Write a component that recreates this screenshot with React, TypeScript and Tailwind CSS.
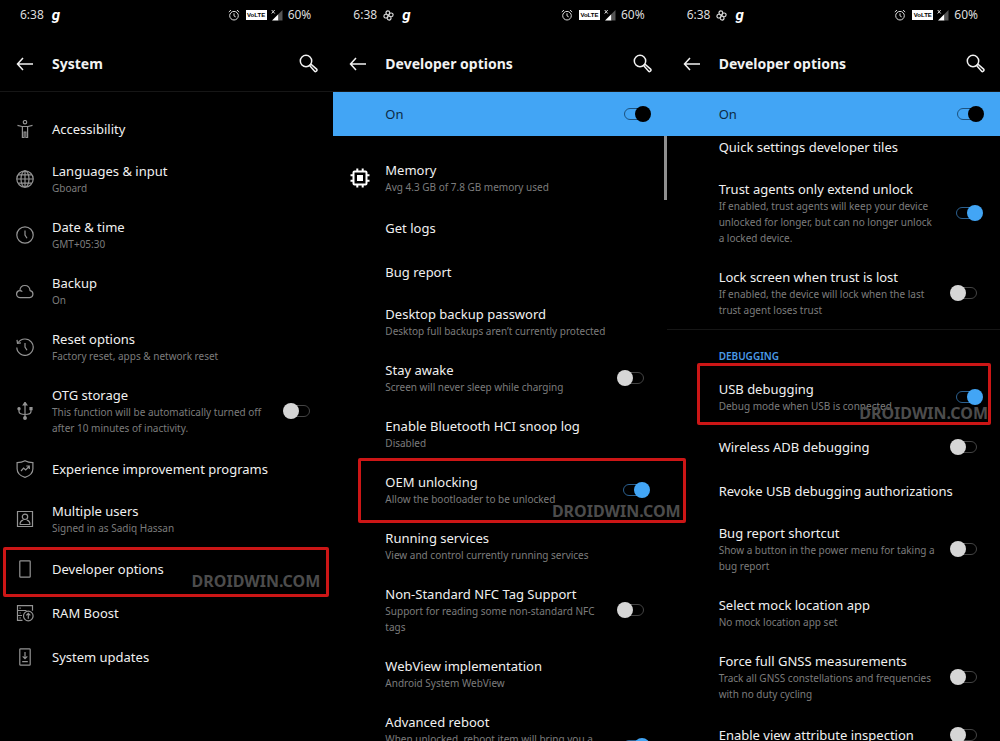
import { useId, useState } from 'react'
import type { ReactNode } from 'react'
import clsx from 'clsx'

type Option = {
  title: string
  summary?: string
  icon?: ReactNode
  checked?: boolean
  // placement of the red frame (and the caption in its corner) over the row
  frame?: string
}

const line = {
  viewBox: '0 0 18 18',
  fill: 'none',
  stroke: 'currentColor',
  strokeWidth: 1.2,
  className: 'w-[18px] h-[18px]',
  'aria-hidden': true,
} as const

const AccessibilityIcon = () => (
  <svg {...line}>
    <circle cx="9" cy="2.2" r="1.7" />
    <path d="M1.500 5.300 6 6.500h6l4.500-1.200M6.400 6.500v11h1.700v-5.500h1.800v5.500h1.700v-11" />
  </svg>
)

const GlobeIcon = () => (
  <svg {...line}>
    <circle cx="9" cy="9" r="8.200" />
    <ellipse cx="9" cy="9" rx="4" ry="8.200" />
    <path d="M9 .8v16.400M.8 9h16.400M2.200 4.800h13.600M2.200 13.200h13.600" />
  </svg>
)

const ClockIcon = () => (
  <svg {...line}>
    <circle cx="9" cy="9" r="8.200" />
    <path d="M9 4.500V9l2 3.200" />
  </svg>
)

const CloudIcon = () => (
  <svg {...line}>
    <path d="M4.300 15.700a3.500 3.500 0 0 1-.4-7C4 5.500 6 3.500 8.900 3.500s4.900 2 5.200 5.100a3.600 3.600 0 0 1-.4 7.100z" />
    <path d="M3.900 8.700c1 0 1.800.3 2.400.9" />
  </svg>
)

const ResetIcon = () => (
  <svg {...line}>
    <path d="M2.200 4.600A8.200 8.200 0 1 1 .8 9.500" />
    <path d="M1 1.900l.5 3.500 3.400-.5" />
    <path d="M9 5v4l2 3.200" />
  </svg>
)

const UsbIcon = () => (
  <svg {...line}>
    <path d="M9 2.500v13M9 12.500c-3.500 0-6-.8-6-3V7.500M9 12.500c3.500 0 6-.8 6-3V7.500" />
    <path d="M7.200 3 9 .3 10.800 3z" fill="currentColor" />
    <circle cx="9" cy="16" r="1.300" fill="currentColor" />
    <circle cx="3" cy="6.700" r="1.100" fill="currentColor" />
    <path d="M14 5.700h2v2h-2z" fill="currentColor" />
  </svg>
)

const ShieldIcon = () => (
  <svg {...line}>
    <path d="M9 .7c2.300 1.300 4.800 1.900 7.900 2v6.100c0 4.200-3 7.100-7.900 8.500-4.900-1.400-7.900-4.300-7.900-8.500V2.700c3.100-.1 5.600-.7 7.900-2z" />
    <path d="M5 11l2.600-3 2.100 2 3.300-3.500M10.300 6h3v3" />
  </svg>
)

const UserIcon = () => (
  <svg {...line}>
    <path d="M1.500 1.500h15v15h-15z" />
    <circle cx="9" cy="6.800" r="2.700" />
    <path d="M4 14.500c.1-2.500 1.200-3.900 3.200-4.300M14 14.500c-.1-2.500-1.200-3.900-3.200-4.300M3.800 14.500h10.400" />
  </svg>
)

const PhoneIcon = () => (
  <svg {...line}>
    <rect x="3.800" y=".8" width="10.400" height="16.400" rx=".8" />
  </svg>
)

const RamIcon = () => (
  <svg {...line}>
    <path d="M6.500 16.300H1.500V1.700h15v5M1.500 6.500h9M1.500 11.500H6" />
    <path d="M3.500 4.100h1.200M3.500 9h1.200M3.500 13.900h1.200" />
    <circle cx="12.300" cy="12" r="4.800" />
    <path d="M12.300 14.700V9.500M10.300 11.300l2-2 2 2" />
  </svg>
)

const UpdateIcon = () => (
  <svg {...line}>
    <rect x="3.800" y=".8" width="10.400" height="16.400" rx=".8" />
    <path d="M9 4v6.500M6.700 8.300 9 10.600l2.300-2.300M6.200 13.700h5.600" />
  </svg>
)

const ChipIcon = () => (
  <svg viewBox="0 0 20 20" className="ml-1 h-5 w-5 shrink-0 text-white" fill="none" stroke="currentColor" strokeWidth="2" aria-hidden>
    <rect x="3.500" y="3.500" width="13" height="13" rx="1" />
    <path d="M7 7h6v6H7z" fill="currentColor" stroke="none" />
    <path d="M7.300 3.500V.5M12.700 3.500V.5M7.300 19.500v-3M12.700 19.500v-3M3.500 7.300h-3M3.500 12.700h-3M19.500 7.300h-3M19.500 12.700h-3" />
  </svg>
)

const systemOptions: Option[] = [
  { title: 'Accessibility', icon: <AccessibilityIcon /> },
  { title: 'Languages & input', summary: 'Gboard', icon: <GlobeIcon /> },
  { title: 'Date & time', summary: 'GMT+05:30', icon: <ClockIcon /> },
  { title: 'Backup', summary: 'On', icon: <CloudIcon /> },
  { title: 'Reset options', summary: 'Factory reset, apps & network reset', icon: <ResetIcon /> },
  {
    title: 'OTG storage',
    summary: 'This function will be automatically turned off after 10 minutes of inactivity.',
    icon: <UsbIcon />,
    checked: false,
  },
  { title: 'Experience improvement programs', icon: <ShieldIcon /> },
  { title: 'Multiple users', summary: 'Signed in as Sadiq Hassan', icon: <UserIcon /> },
  { title: 'Developer options', icon: <PhoneIcon />, frame: 'left-[3px] right-1 top-0 -bottom-1.5 pr-1.5 pb-1' },
  { title: 'RAM Boost', icon: <RamIcon /> },
  { title: 'System updates', icon: <UpdateIcon /> },
]

const generalOptions: Option[] = [
  { title: 'Memory', summary: 'Avg 4.3 GB of 7.8 GB memory used', icon: <ChipIcon /> },
  { title: 'Get logs' },
  { title: 'Bug report' },
  { title: 'Desktop backup password', summary: 'Desktop full backups aren’t currently protected' },
  { title: 'Stay awake', summary: 'Screen will never sleep while charging', checked: false },
  { title: 'Enable Bluetooth HCI snoop log', summary: 'Disabled' },
  {
    title: 'OEM unlocking',
    summary: 'Allow the bootloader to be unlocked',
    checked: true,
    frame: 'left-[25px] -right-[19px] -top-1 -bottom-[5px] pr-0.5',
  },
  { title: 'Running services', summary: 'View and control currently running services' },
  { title: 'Non-Standard NFC Tag Support', summary: 'Support for reading some non-standard NFC tags', checked: false },
  { title: 'WebView implementation', summary: 'Android System WebView' },
  {
    title: 'Advanced reboot',
    summary: 'When unlocked, reboot item will bring you a choice to reboot into recovery or bootloader directly from the power menu',
    checked: true,
  },
]

const trustOptions: Option[] = [
  { title: 'Quick settings developer tiles' },
  {
    title: 'Trust agents only extend unlock',
    summary: 'If enabled, trust agents will keep your device unlocked for longer, but can no longer unlock a locked device.',
    checked: true,
  },
  {
    title: 'Lock screen when trust is lost',
    summary: 'If enabled, the device will lock when the last trust agent loses trust',
    checked: false,
  },
]

const debuggingOptions: Option[] = [
  {
    title: 'USB debugging',
    summary: 'Debug mode when USB is connected',
    checked: true,
    frame: 'left-[30px] right-[9px] -top-1.5 bottom-0 pr-0',
  },
  { title: 'Wireless ADB debugging', checked: false },
  { title: 'Revoke USB debugging authorizations' },
  { title: 'Bug report shortcut', summary: 'Show a button in the power menu for taking a bug report', checked: false },
  { title: 'Select mock location app', summary: 'No mock location app set' },
  {
    title: 'Force full GNSS measurements',
    summary: 'Track all GNSS constellations and frequencies with no duty cycling',
    checked: false,
  },
  { title: 'Enable view attribute inspection', checked: false },
]

function Toggle({ id, defaultChecked, inverted }: { id: string; defaultChecked: boolean; inverted?: boolean }) {
  const [on, setOn] = useState(defaultChecked)

  return (
    <span className="relative flex h-4 w-[33px] shrink-0 items-center justify-center">
      <input
        id={id}
        type="checkbox"
        role="switch"
        checked={on}
        onChange={(e) => setOn(e.target.checked)}
        className="absolute inset-0 z-10 cursor-pointer appearance-none"
      />
      <span
        className={clsx(
          'h-3 w-[21px] rounded-full border',
          inverted ? 'border-[#1c527f]' : on ? 'border-[#2b608f]' : 'border-[#444]',
        )}
      />
      <span
        className={clsx(
          'absolute top-0 h-4 w-4 rounded-full',
          on ? 'right-0' : 'left-0',
          inverted ? 'bg-black' : on ? 'bg-[#42a5f5]' : 'bg-[#d6d6d6]',
        )}
      />
    </span>
  )
}

function Row({ title, summary, icon, checked, frame }: Option) {
  const id = useId()
  const hasToggle = checked !== undefined
  const Title = hasToggle ? 'label' : 'span'

  return (
    <li className="relative flex min-h-11 items-center pr-[17px]">
      <span className="flex w-[52px] shrink-0 justify-center pr-[3px] text-[#949494]">{icon}</span>
      <span className={clsx('min-w-0 flex-1', summary && 'pt-3 pb-[11px]', hasToggle && 'pr-3')}>
        <Title htmlFor={hasToggle ? id : undefined} className="block text-[13px] leading-[17px] whitespace-nowrap text-[#f0f0f0]">
          {title}
        </Title>
        {summary && <span className="block text-[10px] leading-4 text-[#7c7c7c]">{summary}</span>}
      </span>
      {hasToggle && <Toggle id={id} defaultChecked={checked} />}
      {frame && (
        <span className={clsx('pointer-events-none absolute z-20 flex items-end justify-end rounded-[2px] border-[3px] border-[#cc1616]', frame)}>
          <span className="text-[16px] leading-[18px] font-bold text-[#4c4c4c]">DROIDWIN.COM</span>
        </span>
      )}
    </li>
  )
}

function StatusBar({ showFan }: { showFan?: boolean }) {
  return (
    <div className="flex h-7 items-center pt-0.5 pr-[22px] pl-5 text-[12px] text-[#ddd]">
      <span>6:38</span>
      {showFan && (
        <svg viewBox="0 0 12 12" className="ml-1.5 h-[11px] w-[11px]" fill="none" stroke="currentColor" strokeWidth="1.300" aria-hidden>
          <path d="M6 6C2.500 5.500 2.500 1 5.200 1S8 4 6 6zM6 6c.5-3.500 5-3.500 5-.8S8 8 6 6zM6 6c3.500.5 3.500 5 .8 5S4 8 6 6zM6 6c-.5 3.500-5 3.500-5 .8S4 4 6 6z" />
        </svg>
      )}
      <span className="ml-2 font-['Roboto'] text-[15px] leading-4 font-bold text-white italic">g</span>
      <svg viewBox="0 0 12 12" className="ml-auto h-3 w-3" fill="none" stroke="currentColor" aria-hidden>
        <circle cx="6" cy="6.700" r="4.300" />
        <path d="M6 4.300v2.600l1.700 1M.8 3 3 1.100M11.200 3 9 1.100" />
      </svg>
      <span className="ml-1.5 flex h-[10px] w-[21px] items-center justify-center bg-white font-['Liberation_Sans'] text-[6px] leading-none font-bold text-black">
        VoLTE
      </span>
      <svg viewBox="0 0 12 12" className="ml-1 h-3 w-3" aria-hidden>
        <path d="M1 11.500 7.500 5v6.500z" fill="#fff" />
        <path d="M7.500 5 11.500 1v10.500h-4z" fill="#555" />
        <path d="M.7 1l3 3.500M3.700 1l-3 3.500" stroke="#ddd" />
      </svg>
      <span className="ml-[5px]">60%</span>
    </div>
  )
}

function TitleBar({ title }: { title: string }) {
  return (
    <header className="flex h-16 items-center border-b border-[#161616] pt-2 pr-[15px] pl-4 text-[#f2f2f2]">
      <button type="button" aria-label="Back">
        <svg viewBox="0 0 18 18" className="h-[18px] w-[18px]" fill="none" stroke="currentColor" strokeWidth="1.500" aria-hidden>
          <path d="M17 9H1.500M7 3 1.500 9 7 15" />
        </svg>
      </button>
      <h1 className="ml-[18px] flex-1 text-[14px] leading-5 font-bold">{title}</h1>
      <button type="button" aria-label="Search">
        <svg viewBox="0 0 19 19" className="h-[19px] w-[19px]" fill="none" stroke="currentColor" strokeWidth="1.500" aria-hidden>
          <circle cx="7" cy="7" r="5.700" />
          <path d="M10.600 11.500 12 10.200l5.600 4.900a1.500 1.500 0 0 1-2 2.200z" />
        </svg>
      </button>
    </header>
  )
}

function MasterSwitch() {
  const id = useId()
  return (
    <div className="relative z-10 flex h-11 items-center bg-[#42a5f5] pr-4 pl-[52px]">
      <label htmlFor={id} className="flex-1 text-[13px] leading-[17px] text-[#0c2a44]">
        On
      </label>
      <Toggle id={id} defaultChecked inverted />
    </div>
  )
}

const List = ({ options }: { options: Option[] }) => (
  <ul>
    {options.map((option) => (
      <Row key={option.title} {...option} />
    ))}
  </ul>
)

export default function App() {
  return (
    <main className="grid h-screen grid-cols-3 overflow-hidden bg-black font-['Noto_Sans',sans-serif]">
      <section>
        <StatusBar />
        <TitleBar title="System" />
        <div className="pt-[15px]">
          <List options={systemOptions} />
        </div>
      </section>

      <section>
        <StatusBar showFan />
        <TitleBar title="Developer options" />
        <MasterSwitch />
        <div className="relative pt-3.5">
          <span className="absolute top-0 right-0 h-16 w-[3px] bg-[#8f8f8f]" />
          <List options={generalOptions} />
        </div>
      </section>

      <section>
        <StatusBar showFan />
        <TitleBar title="Developer options" />
        <MasterSwitch />
        {/* scrolled part way down, the first row sits close under the switch bar */}
        <div className="-mt-[11px]">
          <List options={trustOptions} />
          <h2 className="flex h-10 items-center border-t border-[#161616] pt-3 pl-[52px] text-[10px] leading-4 font-semibold text-[#4a9be8]">
            DEBUGGING
          </h2>
          <List options={debuggingOptions} />
        </div>
      </section>
    </main>
  )
}
